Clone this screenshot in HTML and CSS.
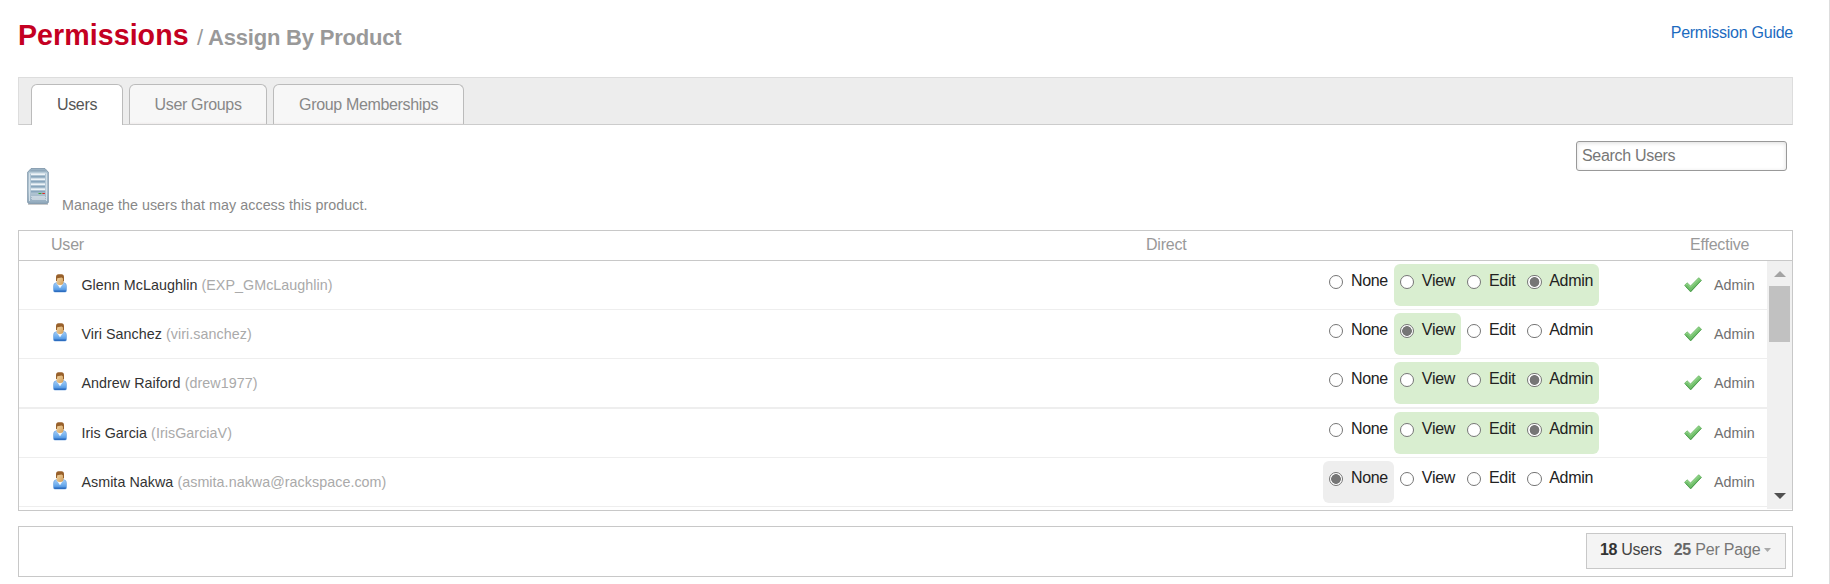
FILE: index.html
```html
<!DOCTYPE html>
<html lang="en">
<head>
<meta charset="utf-8">
<title>Permissions</title>
<link rel="stylesheet" href="styles.css">
</head>
<body>
<svg class="defs" width="0" height="0" aria-hidden="true">
  <defs>
    <linearGradient id="shirt" x1="0" y1="0" x2="0" y2="1"><stop offset="0" stop-color="#a5cdf5"/><stop offset=".55" stop-color="#6faeee"/><stop offset="1" stop-color="#3f85d6"/></linearGradient>
    <linearGradient id="skin" x1="0" y1="0" x2="1" y2="1"><stop offset="0" stop-color="#f6dcae"/><stop offset="1" stop-color="#cf9b55"/></linearGradient>
    <linearGradient id="steel" x1="0" y1="0" x2="0" y2="1"><stop offset="0" stop-color="#a9c0d0"/><stop offset=".6" stop-color="#b9ccd9"/><stop offset="1" stop-color="#92aabd"/></linearGradient>
    <linearGradient id="leaf" x1="0" y1="0" x2="0" y2="1"><stop offset="0" stop-color="#7fcb78"/><stop offset="1" stop-color="#6cbc66"/></linearGradient>
    <symbol id="person" viewBox="0 0 14 19">
      <path d="M.5 12.200Q.5 9 3.500 8.600h7q3 .4 3 3.600v4.300q0 1.500-1.500 1.500h-10q-1.500 0-1.500-1.500z" fill="url(#shirt)" stroke="#6ba2e0" stroke-width=".6"/>
      <path d="M1 16.500h12v.5q0 1-1.200 1H2.200Q1 18 1 17z" fill="#2d6dbf"/>
      <path d="M3.500 9l3.500 5.200 3.500-5.200z" fill="#f5f9fd"/>
      <rect x="3.500" y="1.500" width="7" height="9.500" rx="3" fill="url(#skin)"/>
      <path d="M3 7V3.200Q3 .3 5.500.3h3Q11 .3 11 3.200V7l-1 .5V4.500L8.700 3.600 4.300 4.200 3.900 7z" fill="#98602a"/>
    </symbol>
    <symbol id="tick" viewBox="0 0 18 16">
      <path d="M.5 8.300L3.200 5.800 6.500 9 14.700.7 17.500 3.200 6.700 15z" fill="url(#leaf)" stroke="#6bb565" stroke-width=".7" stroke-linejoin="round"/>
      <path d="M1.500 9.300L6.700 14.400 17 3.600" fill="none" stroke="#4c9c4e" stroke-width="1"/>
      <path d="M1.800 8L3.300 6.800 6.500 10.200 14.700 1.900" fill="none" stroke="#98d790" stroke-width=".9"/>
    </symbol>
  </defs>
</svg>
<div class="page">
  <header class="top">
    <h1 class="title">Permissions <span class="slash">/</span> <span class="sub">Assign By Product</span></h1>
    <a class="guide">Permission Guide</a>
  </header>
  <nav class="tabs">
    <a class="tab active">Users</a>
    <a class="tab">User Groups</a>
    <a class="tab">Group Memberships</a>
  </nav>
  <section class="intro">
    <svg class="server" viewBox="0 0 22 38" width="22" height="38">
      <path d="M1 35.500h20v1.500H1z" fill="#c9c9c9"/>
      <path d="M4 .6h14l3.300 3.600V34q0 1.400-1.400 1.400H2.100Q.7 35.400.7 34V4.200z" fill="url(#steel)" stroke="#7c93a7" stroke-width=".9"/>
      <path d="M4 1.600h14l1.800 2H2.200z" fill="#8fa7ba"/>
      <path d="M2.500 33V5.200h17V33" fill="none" stroke="#d2dfe8" stroke-width="1"/>
      <path d="M4 6.500h14M4 11.500h14M4 16.500h14M4 21.500h14" stroke="#eef4f8" stroke-width="2"/>
      <path d="M4 8.500h14M4 13.500h14M4 18.500h14M4 23.500h14" stroke="#88a5bc" stroke-width="2"/>
      <path d="M11.500 25.500h3" stroke="#35a02f" stroke-width="1"/><path d="M15.300 25.500h2.600" stroke="#dc2a22" stroke-width="1"/>
      <path d="M4.500 28.500h14M4.500 30.500h14" stroke="#eef3f7" stroke-width="1" stroke-dasharray="1 1"/><path d="M5.500 29.500h13M5.500 31.500h13" stroke="#eef3f7" stroke-width="1" stroke-dasharray="1 1"/>
    </svg>
    <p class="desc">Manage the users that may access this product.</p>
    <input class="search" type="text" placeholder="Search Users">
  </section>
  <section class="table">
    <div class="thead"><span>User</span><span>Direct</span><span>Effective</span></div>
    <div class="tbody">
      <div class="rows">
        <div class="row">
          <svg class="person"><use href="#person"/></svg><div class="name">Glenn McLaughlin <span>(EXP_GMcLaughlin)</span></div>
          <div class="opts"><label><input type="radio" name="r1">None</label><label class="on first"><input type="radio" name="r1">View</label><label class="on"><input type="radio" name="r1">Edit</label><label class="on last"><input type="radio" name="r1" checked>Admin</label></div>
          <svg class="tick"><use href="#tick"/></svg><span class="eff">Admin</span>
        </div>
        <div class="row">
          <svg class="person"><use href="#person"/></svg><div class="name">Viri Sanchez <span>(viri.sanchez)</span></div>
          <div class="opts"><label><input type="radio" name="r2">None</label><label class="on first last"><input type="radio" name="r2" checked>View</label><label><input type="radio" name="r2">Edit</label><label><input type="radio" name="r2">Admin</label></div>
          <svg class="tick"><use href="#tick"/></svg><span class="eff">Admin</span>
        </div>
        <div class="row thick">
          <svg class="person"><use href="#person"/></svg><div class="name">Andrew Raiford <span>(drew1977)</span></div>
          <div class="opts"><label><input type="radio" name="r3">None</label><label class="on first"><input type="radio" name="r3">View</label><label class="on"><input type="radio" name="r3">Edit</label><label class="on last"><input type="radio" name="r3" checked>Admin</label></div>
          <svg class="tick"><use href="#tick"/></svg><span class="eff">Admin</span>
        </div>
        <div class="row">
          <svg class="person"><use href="#person"/></svg><div class="name">Iris Garcia <span>(IrisGarciaV)</span></div>
          <div class="opts"><label><input type="radio" name="r4">None</label><label class="on first"><input type="radio" name="r4">View</label><label class="on"><input type="radio" name="r4">Edit</label><label class="on last"><input type="radio" name="r4" checked>Admin</label></div>
          <svg class="tick"><use href="#tick"/></svg><span class="eff">Admin</span>
        </div>
        <div class="row">
          <svg class="person"><use href="#person"/></svg><div class="name">Asmita Nakwa <span>(asmita.nakwa@rackspace.com)</span></div>
          <div class="opts"><label class="off first last"><input type="radio" name="r5" checked>None</label><label><input type="radio" name="r5">View</label><label><input type="radio" name="r5">Edit</label><label><input type="radio" name="r5">Admin</label></div>
          <svg class="tick"><use href="#tick"/></svg><span class="eff">Admin</span>
        </div>
      </div>
      <div class="scroll">
        <svg class="arrow" width="12" height="6" viewBox="0 0 12 6"><path d="M0 6L6 0l6 6z" fill="#a3a3a3"/></svg>
        <div class="thumb"></div>
        <svg class="arrow down" width="12" height="6" viewBox="0 0 12 6"><path d="M0 0h12L6 6z" fill="#505050"/></svg>
      </div>
    </div>
  </section>
  <footer class="foot">
    <div class="pager"><span class="count"><b>18</b> Users</span><span class="per"><b>25</b> Per Page</span><svg class="caret" width="7" height="4" viewBox="0 0 7 4"><path d="M0 0h7L3.500 4z" fill="#aaa"/></svg></div>
  </footer>
</div>
</body>
</html>
```
FILE: styles.css
```css
* { box-sizing: border-box; }
body {
  margin: 0;
  background: #fff;
  font-family: "Liberation Sans", Arial, sans-serif;
  font-size: 16px;
  letter-spacing: -.3px;
  color: #333;
}
.defs { position: absolute; }
.page {
  height: 584px;
  padding: 0 36px 0 18px;
  border-right: 1px solid #ddd;
  overflow: hidden;
}
.top {
  display: flex;
  justify-content: space-between;
  height: 77px;
}
.title {
  margin: 0;
  padding-top: 18px;
  font-size: 28.6px;
  line-height: 34px;
  letter-spacing: .05px;
  color: #c40022;
  white-space: nowrap;
}
.slash, .sub { font-size: 22px; color: #999; letter-spacing: -.2px; }
.slash { font-weight: normal; margin: 0 -3px 0 .5px; }
.guide { padding-top: 24px; line-height: 18px; letter-spacing: -.25px; color: #1c6bbf; }

.tabs {
  display: flex;
  gap: 6px;
  height: 48px;
  padding: 6px 0 0 12px;
  background: #ededed;
  border: 1px solid #ddd;
  border-bottom-color: #ccc;
}
.tab {
  height: 40px;
  padding: 0 24.5px 0 25px;
  line-height: 39px;
  letter-spacing: -.34px;
  color: #888;
  background: linear-gradient(#f7f7f7 37px, #f0ecec);
  border: 1px solid #bbb;
  border-bottom: 0;
  border-radius: 6px 6px 0 0;
}
.tab.active { height: 41px; background: #fff; color: #555; }

.intro { display: flex; height: 105px; padding-right: 6px; }
.server { margin: 43px 0 0 9px; }
.desc {
  flex: 1;
  margin: 71px 0 0 13px;
  font-size: 14.3px;
  line-height: 18px;
  letter-spacing: .04px;
  color: #888;
}
.search {
  width: 211px;
  height: 30px;
  margin-top: 16px;
  padding: 0 5px;
  font: inherit;
  letter-spacing: inherit;
  border: 1px solid #999;
  border-radius: 3px;
  box-shadow: inset 0 1px 4px #ddd;
}
.search::placeholder { color: #777; }

.table { height: 281px; border: 1px solid #c8c8c8; }
.thead {
  display: grid;
  grid-template-columns: 1095px 544px 1fr;
  height: 30px;
  padding-left: 32px;
  line-height: 27px;
  letter-spacing: -.2px;
  color: #999;
  border-bottom: 1px solid #c8c8c8;
}
.tbody { display: flex; height: 249px; }
.rows { flex: 1; }
.row {
  display: grid;
  grid-template-columns: 28px 1242px 361px 30px 1fr;
  height: 49px;
  padding-left: 34px;
  border-bottom: 1px solid #eee;
}
.row.thick { height: 50px; border-bottom-width: 2px; }
.person { width: 14px; height: 19px; margin-top: 13px; }
.name { padding: 15px 0 0 .4px; line-height: 18px; font-size: 14.3px; letter-spacing: .05px; color: #333; }
.name span { color: #aaa; }
.opts { display: flex; margin-top: 3px; height: 42px; color: #222; }
.opts label {
  display: flex;
  gap: 7.6px;
  padding: 7px 6px 0;
  line-height: 19px;
}
.opts .on { background: #d9eed0; }
.opts .off { background: #eee; }
.opts .first { border-top-left-radius: 6px; border-bottom-left-radius: 6px; }
.opts .last { border-top-right-radius: 6px; border-bottom-right-radius: 6px; }
.opts input {
  appearance: none;
  flex: none;
  width: 14.3px;
  height: 14.3px;
  margin: 4px 0 0;
  border: 1px solid #767676;
  border-radius: 50%;
  background: #fff;
}
.opts input:checked { background: radial-gradient(circle, #767676 4.5px, #fff 5.2px); }
.tick { width: 18px; height: 16px; margin-top: 16px; }
.eff { padding-top: 15px; line-height: 18px; font-size: 14.3px; letter-spacing: .04px; color: #707070; }

.scroll {
  display: flex;
  flex-direction: column;
  align-items: center;
  width: 25px;
  height: 248px;
  background: #f0f0f0;
}
.arrow { margin-top: 10px; }
.arrow.down { margin: auto 0 10px; }
.thumb { width: 21px; height: 56px; margin-top: 9px; background: #c1c1c1; }

.foot {
  display: flex;
  justify-content: flex-end;
  height: 51px;
  margin-top: 15px;
  padding: 6px 6px 0;
  border: 1px solid #c8c8c8;
}
.pager {
  display: flex;
  align-items: center;
  width: 200px;
  height: 36px;
  padding: 0 0 2px 13px;
  background: #f4f4f4;
  border: 1px solid #c8c8c8;
  white-space: nowrap;
}
.count { margin-right: 12px; color: #444; }
.count b { color: #333; }
.per { color: #777; letter-spacing: -.2px; }
.per b { color: #666; }
.caret { margin-left: 4px; }
```
